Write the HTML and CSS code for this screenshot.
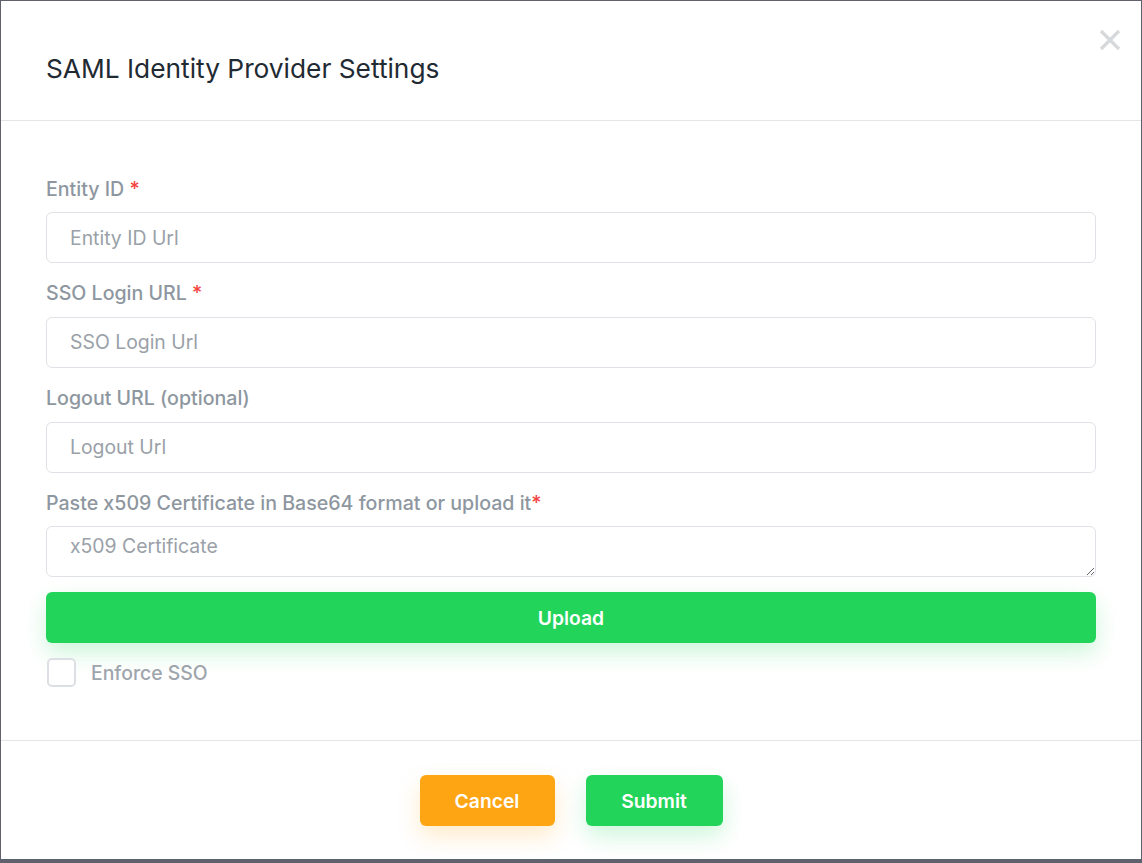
FILE: index.html
```html
<!DOCTYPE html>
<html>
<head>
<meta charset="utf-8">
<link rel="stylesheet" href="styles.css">
</head>
<body>
<div class="modal">
  <div class="modal-header">
    <h2 class="modal-title">SAML Identity Provider Settings</h2>
    <button class="close" aria-label="Close">
      <svg width="22" height="22" viewBox="0 0 22 22"><path d="M2 2 L20 20 M20 2 L2 20" stroke="#d6d9dc" stroke-width="3.2" stroke-linecap="butt"/></svg>
    </button>
  </div>
  <div class="modal-body">
    <div class="field">
      <label class="label">Entity ID <span class="req">*</span></label>
      <input class="input" type="text" placeholder="Entity ID Url">
    </div>
    <div class="field">
      <label class="label">SSO Login URL <span class="req">*</span></label>
      <input class="input" type="text" placeholder="SSO Login Url">
    </div>
    <div class="field">
      <label class="label">Logout URL (optional)</label>
      <input class="input" type="text" placeholder="Logout Url">
    </div>
    <div class="field last">
      <label class="label">Paste x509 Certificate in Base64 format or upload it<span class="req">*</span></label>
      <textarea class="input textarea" placeholder="x509 Certificate"></textarea>
    </div>
    <button class="btn btn-green btn-block">Upload</button>
    <label class="check">
      <span class="box"></span>
      <span class="check-text">Enforce SSO</span>
    </label>
  </div>
  <div class="modal-footer">
    <button class="btn btn-orange btn-foot">Cancel</button>
    <button class="btn btn-green btn-foot submit">Submit</button>
  </div>
</div>
</body>
</html>
```
FILE: styles.css
```css
* { box-sizing: border-box; }
html, body { margin: 0; padding: 0; }
body {
  background: #5f616d;
  width: 1142px;
  height: 863px;
  overflow: hidden;
  font-family: Inter, "Noto Sans", sans-serif;
}
.modal {
  margin: 1px 0 0 1px;
  width: 1140px;
  height: 858px;
  background: #fff;
  display: flex;
  flex-direction: column;
}
.modal-header {
  position: relative;
  padding: 49px 45px 33px;
  border-bottom: 1px solid #e4e6e9;
}
.modal-title {
  margin: 0;
  font-size: 26.3px;
  line-height: 37px;
  font-weight: 400;
  color: #1f2a33;
}
.close {
  position: absolute;
  top: 28px;
  right: 20px;
  border: 0;
  background: none;
  padding: 0;
  width: 22px;
  height: 22px;
  cursor: pointer;
}
.close svg { display: block; }
.modal-body {
  flex: 1;
  padding: 54.5px 45px 0 45px;
}
.field { margin-bottom: 17px; }
.field.last { margin-bottom: 15px; }
.label {
  display: block;
  font-size: 19.6px;
  line-height: 27.7px;
  font-weight: 500;
  color: #8e979f;
  margin-bottom: 9px;
}
.req { color: #f4433f; }
.input {
  display: block;
  width: 100%;
  height: 51px;
  border: 1px solid #dfe2e6;
  border-radius: 6px;
  padding: 0 22px 0 23px;
  font-family: Inter, "Noto Sans", sans-serif;
  font-size: 19.4px;
  color: #333;
  background: #fff;
  outline: none;
}
.input::placeholder { color: #9aa1a8; }
.textarea {
  padding-top: 6px;
  resize: vertical;
  line-height: 26px;
}
.btn {
  border: 0;
  border-radius: 6px;
  color: #fff;
  font-family: Inter, "Noto Sans", sans-serif;
  font-size: 19.3px;
  font-weight: 600;
  cursor: pointer;
}
.btn-green { background: #22d45a; box-shadow: 0 10px 22px rgba(34, 212, 90, 0.22); }
.btn-orange { background: #fea514; box-shadow: 0 10px 22px rgba(254, 165, 20, 0.22); }
.btn-block {
  display: block;
  width: 100%;
  height: 51px;
}
.check {
  display: flex;
  align-items: center;
  margin-top: 15px;
  margin-left: 1px;
  gap: 15px;
}
.box {
  width: 29px;
  height: 29px;
  border: 2px solid #dcdfe3;
  border-radius: 5px;
  background: #fff;
}
.check-text {
  font-size: 19.4px;
  font-weight: 500;
  color: #9fa5ac;
}
.modal-footer {
  border-top: 1px solid #e4e6e9;
  padding: 34px 0 33px;
  display: flex;
  justify-content: center;
  gap: 31px;
}
.btn-foot {
  height: 51px;
  width: 135px;
}
.btn-foot.submit { width: 137px; }
```
